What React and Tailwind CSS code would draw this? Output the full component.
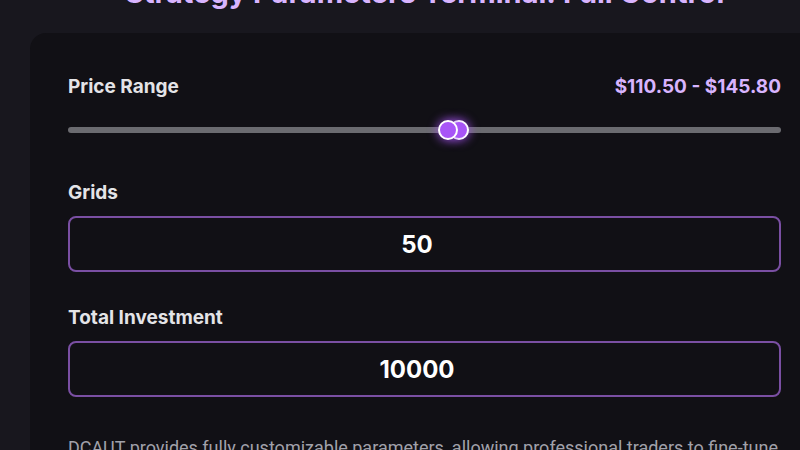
import { useState } from "react";

const Field = ({ label, value, className }) => (
  <div className={className}>
    <div className="mb-[9px] text-[19px] font-bold leading-7 text-[#e4e4e7]">
      {label}
    </div>
    <input
      type="number"
      defaultValue={value}
      className="h-14 w-full rounded-lg border-2 border-[#7a4fa3] bg-transparent text-center text-2xl font-bold text-white outline-none"
    />
  </div>
);

const App = () => {
  const [range] = useState({ min: 110.5, max: 145.8 });

  return (
    <div
      className="h-[450px] w-[800px] overflow-hidden bg-[#18171e]"
      style={{ fontFamily: "Inter, 'Noto Sans', sans-serif" }}
    >
      <h1 className="-mt-[25px] ml-[125px] whitespace-nowrap text-[29px] font-bold leading-9 text-[#d8b4fe]">
        Strategy Parameters Terminal: Full Control
      </h1>
      <div className="ml-[30px] mt-[22px] w-[789px] rounded-2xl bg-[#111015] px-[38px] pt-10 pb-10">
        <div className="flex items-center justify-between text-[19px] font-bold leading-7">
          <span className="text-[#e4e4e7]">Price Range</span>
          <span className="text-[#d8b4fe]">
            ${range.min.toFixed(2)} - ${range.max.toFixed(2)}
          </span>
        </div>
        <div className="relative mt-[26px] h-1.5 rounded-full bg-[#6b6b70]">
          <span className="absolute left-[381px] top-1/2 h-5 w-5 -translate-y-1/2 rounded-full border-2 border-white bg-[#a855f7] shadow-[0_0_8px_2px_rgba(168,85,247,0.6)]" />
          <span className="absolute left-[370px] top-1/2 h-5 w-5 -translate-y-1/2 rounded-full border-2 border-white bg-[#a855f7] shadow-[0_0_8px_2px_rgba(168,85,247,0.6)]" />
        </div>
        <Field label="Grids" value={50} className="mt-[46px]" />
        <Field label="Total Investment" value={10000} className="mt-[32px]" />
        <p
          className="mt-[37px] text-lg leading-7 text-[#a1a1aa]"
          style={{ fontFamily: "Roboto, sans-serif" }}
        >
          DCAUT provides fully customizable parameters, allowing professional traders to fine-tune
          every aspect of their grid strategy.
        </p>
      </div>
    </div>
  );
};

export default App;
